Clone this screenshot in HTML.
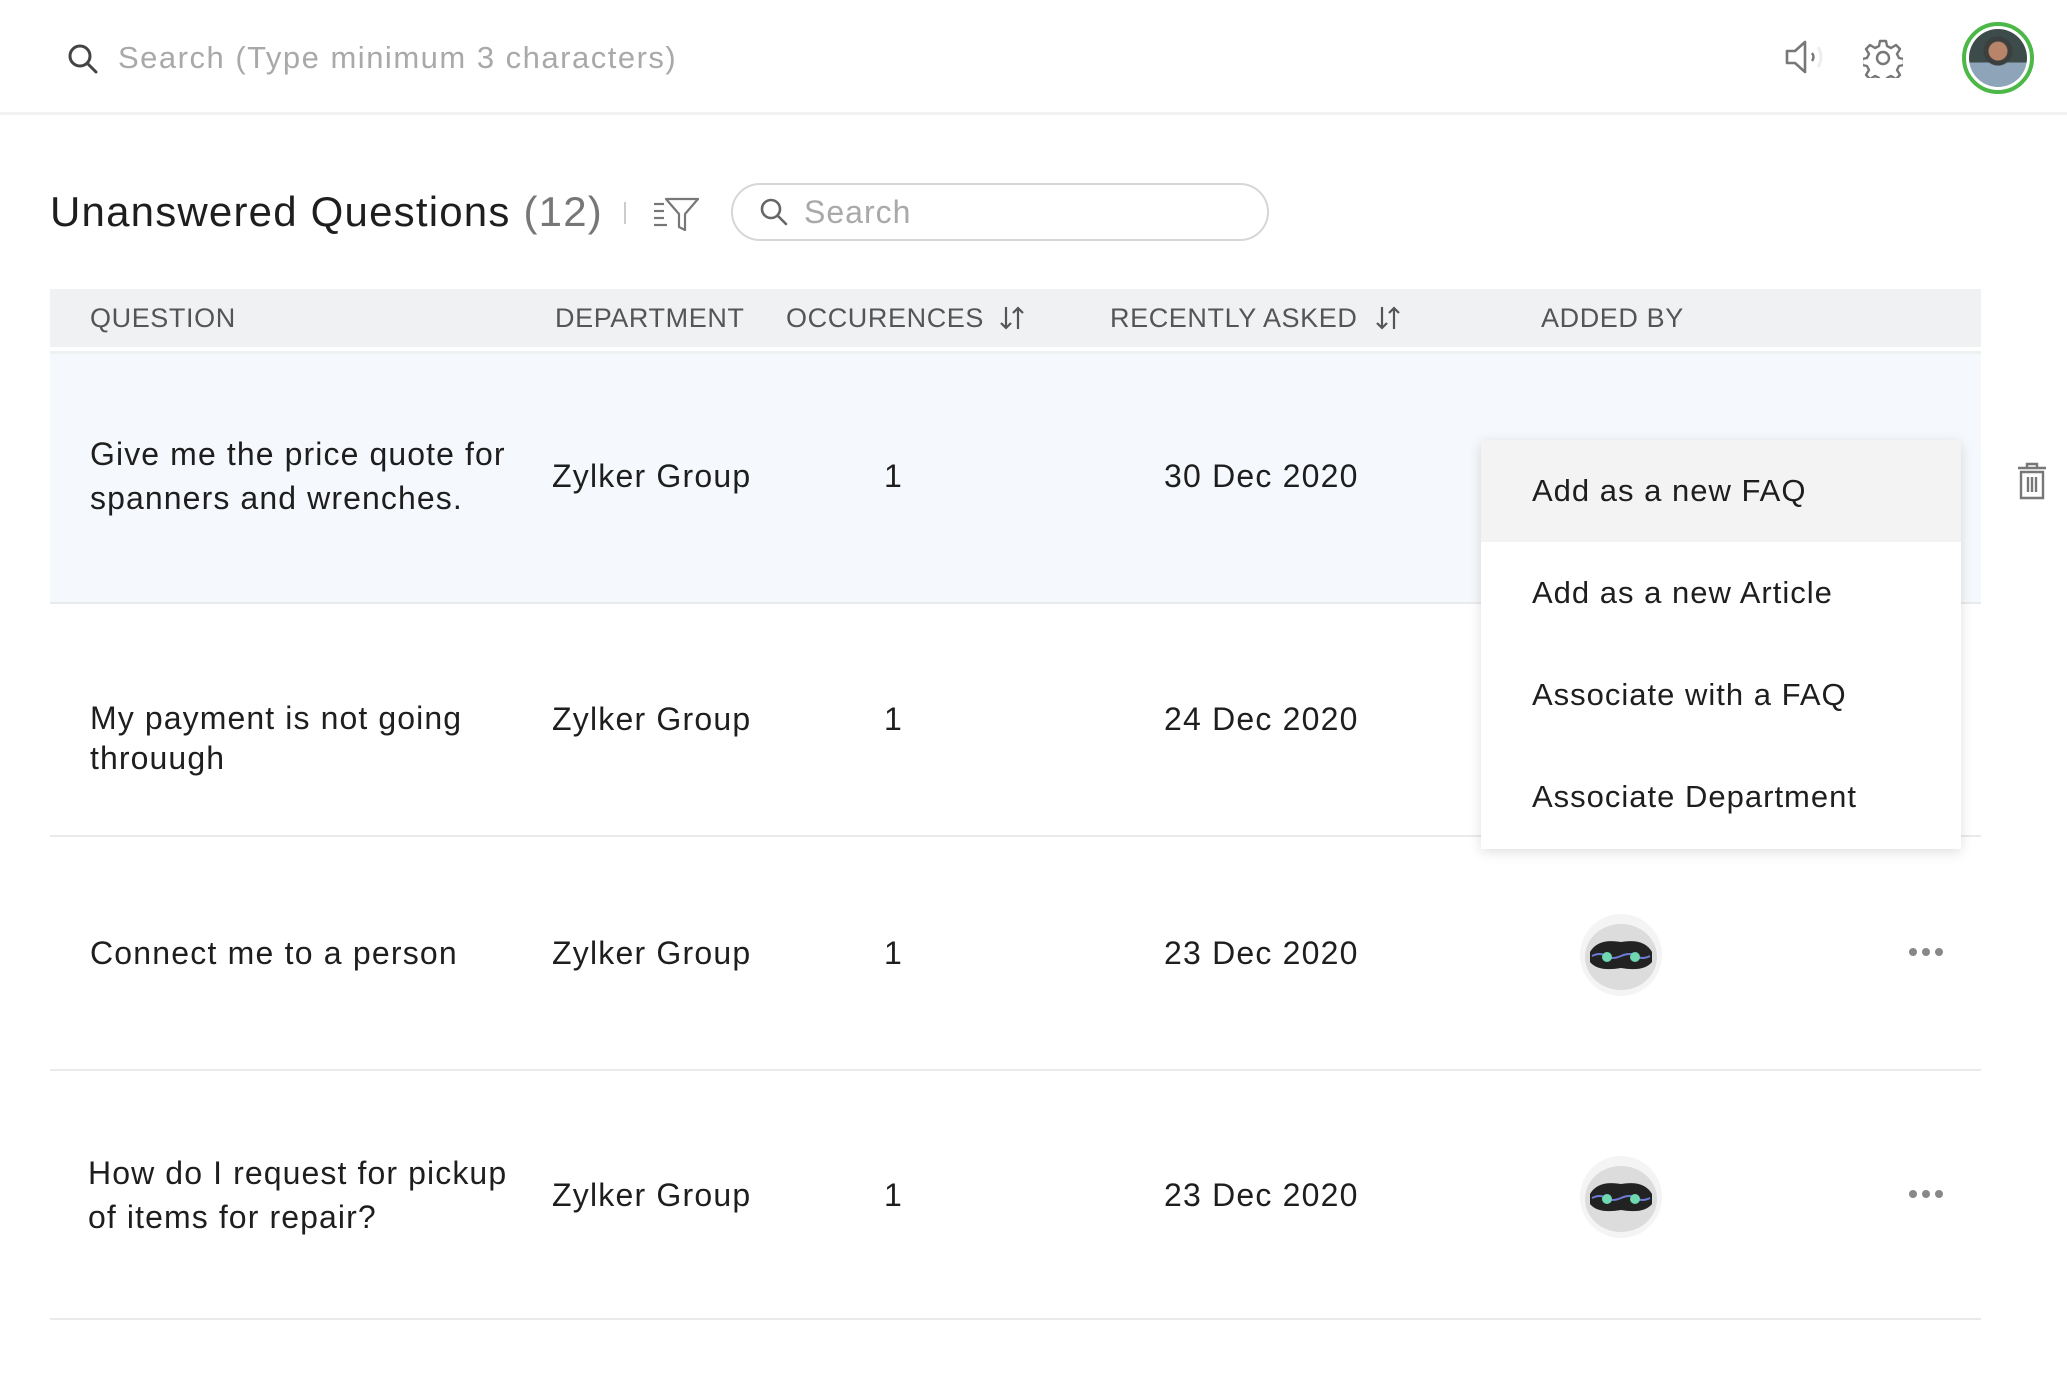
<!DOCTYPE html>
<html><head><meta charset="utf-8">
<style>
*{margin:0;padding:0;box-sizing:border-box}
body{width:2067px;height:1386px;background:#fff;font-family:"Liberation Sans",sans-serif;color:#1e1e1e;position:relative;overflow:hidden}
.a{position:absolute;white-space:nowrap}
.topbar{position:absolute;left:0;top:0;width:2067px;height:115px;border-bottom:3px solid #f1f2f4}
.hdr{position:absolute;left:50px;top:289px;width:1931px;height:58px;background:#f0f1f3}
.hdr span{position:absolute;top:14px;font-size:27px;color:#555;letter-spacing:0.6px}
.line{position:absolute;left:50px;width:1931px;height:2px;background:#e9eaec}
.t{font-size:32px;line-height:44px;color:#1e1e1e;letter-spacing:1.1px}
.c{font-size:32px;color:#1e1e1e;letter-spacing:1.2px}
.menu{position:absolute;left:1481px;top:440px;width:480px;height:409px;background:#fff;box-shadow:0 3px 12px rgba(0,0,0,0.13)}
.menu div{position:absolute;left:0;width:480px;height:102px;font-size:31px;padding-left:51px;line-height:102px;letter-spacing:1px}
.arr{position:absolute;top:12px;font-size:26px;color:#555}
</style></head><body>
<div class="topbar"></div>
<svg class="a" style="left:66px;top:42px" width="34" height="34" viewBox="0 0 34 34"><circle cx="14" cy="14" r="10" fill="none" stroke="#444" stroke-width="3"/><line x1="21.5" y1="21.5" x2="30" y2="30" stroke="#444" stroke-width="3" stroke-linecap="round"/></svg>
<div class="a" style="left:118px;top:40px;font-size:31px;color:#a9a9a9;letter-spacing:1.5px">Search (Type minimum 3 characters)</div>
<svg class="a" style="left:1783px;top:38px" width="44" height="38" viewBox="0 0 44 38"><path d="M4 13 H12 L22 4 V34 L12 25 H4 Z" fill="none" stroke="#777" stroke-width="2.6" stroke-linejoin="round"/><path d="M29 15 Q32 19 29 23" fill="none" stroke="#777" stroke-width="2.4"/><path d="M35 9 Q41 19 35 29" fill="none" stroke="#eee" stroke-width="3"/></svg>
<svg class="a" style="left:1863px;top:38px" width="40" height="40" viewBox="0 0 40 40"><path d="M17 3h6l1 5 4 2 5-3 4 4-3 5 2 4 5 1v6l-5 1-2 4 3 5-4 4-5-3-4 2-1 5h-6l-1-5-4-2-5 3-4-4 3-5-2-4-5-1v-6l5-1 2-4-3-5 4-4 5 3 4-2z" fill="none" stroke="#777" stroke-width="2.4" stroke-linejoin="round"/><circle cx="20" cy="20" r="6" fill="none" stroke="#777" stroke-width="2.4"/></svg>
<div class="a" style="left:1962px;top:22px;width:72px;height:72px;border-radius:50%;border:4px solid #4cb847;background:#fff;padding:3px">
<div style="width:58px;height:58px;border-radius:50%;background:radial-gradient(circle at 50% 38%,#b8856a 0 9px,#3b3f3e 10px 14px,transparent 15px),linear-gradient(#3d4b4a 0 58%,#8ea4b8 58%);overflow:hidden"></div></div>

<div class="a" style="left:50px;top:188px;font-size:42px;color:#1e1e1e;letter-spacing:1.2px">Unanswered Questions <span style="color:#777">(12)</span></div>
<div class="a" style="left:624px;top:202px;width:2px;height:22px;background:#ccc"></div>
<svg class="a" style="left:652px;top:194px" width="50" height="40" viewBox="0 0 50 40"><g stroke="#777" stroke-width="2.2" fill="none"><line x1="2" y1="10" x2="12" y2="10"/><line x1="2" y1="17" x2="12" y2="17"/><line x1="2" y1="24" x2="12" y2="24"/><line x1="2" y1="31" x2="15" y2="31"/><path d="M14 5 H46 L33 20 V36 L27 33 V20 Z" stroke-linejoin="round"/></g></svg>
<div class="a" style="left:731px;top:183px;width:538px;height:58px;border:2px solid #d6d6d6;border-radius:29px"></div>
<svg class="a" style="left:758px;top:196px" width="32" height="32" viewBox="0 0 32 32"><circle cx="13" cy="13" r="9" fill="none" stroke="#666" stroke-width="2.6"/><line x1="20" y1="20" x2="28" y2="28" stroke="#666" stroke-width="2.6" stroke-linecap="round"/></svg>
<div class="a" style="left:804px;top:194px;font-size:32px;color:#a9a9a9;letter-spacing:1px">Search</div>

<div class="hdr">
<span style="left:40px">QUESTION</span>
<span style="left:505px">DEPARTMENT</span>
<span style="left:736px">OCCURENCES</span>
<svg class="arr" style="left:948px;top:16px" width="28" height="26" viewBox="0 0 28 26"><g stroke="#555" stroke-width="2.2" fill="none"><path d="M8 2 V23 M3 18 L8 23 L13 18"/><path d="M20 24 V3 M15 8 L20 3 L25 8"/></g></svg>
<span style="left:1060px">RECENTLY ASKED</span>
<svg class="arr" style="left:1324px;top:16px" width="28" height="26" viewBox="0 0 28 26"><g stroke="#555" stroke-width="2.2" fill="none"><path d="M8 2 V23 M3 18 L8 23 L13 18"/><path d="M20 24 V3 M15 8 L20 3 L25 8"/></g></svg>
<span style="left:1491px">ADDED BY</span>
</div>
<div class="line" style="top:351px;height:3px;background:#eef0f2"></div>
<div class="a" style="left:50px;top:354px;width:1931px;height:248px;background:#f5f8fc"></div>
<div class="line" style="top:602px"></div>
<div class="line" style="top:835px"></div>
<div class="line" style="top:1069px"></div>
<div class="line" style="top:1318px"></div>

<div class="a t" style="left:90px;top:432px">Give me the price quote for<br>spanners and wrenches.</div>
<div class="a c" style="left:552px;top:458px">Zylker Group</div>
<div class="a c" style="left:884px;top:458px">1</div>
<div class="a c" style="left:1164px;top:458px">30 Dec 2020</div>

<div class="a t" style="left:90px;top:698px;line-height:40px">My payment is not going<br>throuugh</div>
<div class="a c" style="left:552px;top:701px">Zylker Group</div>
<div class="a c" style="left:884px;top:701px">1</div>
<div class="a c" style="left:1164px;top:701px">24 Dec 2020</div>

<div class="a c" style="left:90px;top:935px">Connect me to a person</div>
<div class="a c" style="left:552px;top:935px">Zylker Group</div>
<div class="a c" style="left:884px;top:935px">1</div>
<div class="a c" style="left:1164px;top:935px">23 Dec 2020</div>

<div class="a t" style="left:88px;top:1151px">How do I request for pickup<br>of items for repair?</div>
<div class="a c" style="left:552px;top:1177px">Zylker Group</div>
<div class="a c" style="left:884px;top:1177px">1</div>
<div class="a c" style="left:1164px;top:1177px">23 Dec 2020</div>

<svg class="a" style="left:1578px;top:912px" width="86" height="86" viewBox="0 0 86 86"><circle cx="43" cy="43" r="41" fill="#f4f4f4"/><ellipse cx="43" cy="45" rx="36" ry="33" fill="#dcdcdc"/><path d="M12 40 Q20 26 43 30 Q66 26 74 40 V50 Q66 60 43 56 Q20 60 12 50 Z" fill="#222"/><path d="M14 44 Q22 40 28 44 T43 44 T58 44 T72 44" stroke="#6e7bd6" stroke-width="2" fill="none"/><circle cx="29" cy="45" r="5" fill="#6fd8b0"/><circle cx="57" cy="45" r="5" fill="#6fd8b0"/></svg>
<svg class="a" style="left:1578px;top:1154px" width="86" height="86" viewBox="0 0 86 86"><circle cx="43" cy="43" r="41" fill="#f4f4f4"/><ellipse cx="43" cy="45" rx="36" ry="33" fill="#dcdcdc"/><path d="M12 40 Q20 26 43 30 Q66 26 74 40 V50 Q66 60 43 56 Q20 60 12 50 Z" fill="#222"/><path d="M14 44 Q22 40 28 44 T43 44 T58 44 T72 44" stroke="#6e7bd6" stroke-width="2" fill="none"/><circle cx="29" cy="45" r="5" fill="#6fd8b0"/><circle cx="57" cy="45" r="5" fill="#6fd8b0"/></svg>
<svg class="a" style="left:1908px;top:946px" width="36" height="12"><circle cx="5" cy="6" r="4" fill="#888"/><circle cx="18" cy="6" r="4" fill="#888"/><circle cx="31" cy="6" r="4" fill="#888"/></svg>
<svg class="a" style="left:1908px;top:1188px" width="36" height="12"><circle cx="5" cy="6" r="4" fill="#888"/><circle cx="18" cy="6" r="4" fill="#888"/><circle cx="31" cy="6" r="4" fill="#888"/></svg>

<svg class="a" style="left:2016px;top:461px" width="32" height="40" viewBox="0 0 32 40"><g fill="none" stroke="#777" stroke-width="2.4"><path d="M11 6 V3 H21 V6"/><line x1="2" y1="7" x2="30" y2="7"/><path d="M5 11 H27 V37 H5 Z"/><line x1="12" y1="16" x2="12" y2="31"/><line x1="16" y1="16" x2="16" y2="31"/><line x1="20" y1="16" x2="20" y2="31"/></g></svg>

<div class="menu">
<div style="top:0;background:#f3f3f3">Add as a new FAQ</div>
<div style="top:102px">Add as a new Article</div>
<div style="top:204px">Associate with a FAQ</div>
<div style="top:306px">Associate Department</div>
</div>
</body></html>
